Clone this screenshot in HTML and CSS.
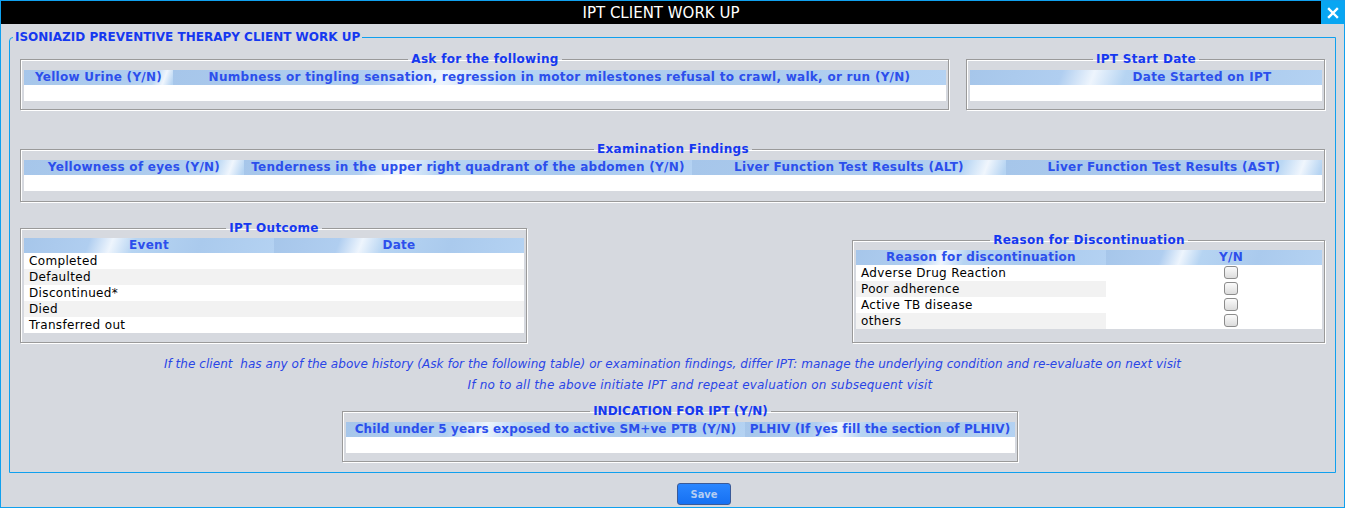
FILE: index.html
```html
<!DOCTYPE html>
<html>
<head>
<meta charset="utf-8">
<title>IPT CLIENT WORK UP</title>
<link rel="stylesheet" href="styles.css">
</head>
<body>
<div class="window">
  <div class="titlebar">
    <div class="title">IPT CLIENT WORK UP</div>
    <div class="close">
      <svg width="12" height="12" viewBox="0 0 12 12"><path d="M2 2 L10 10 M10 2 L2 10" stroke="#fff" stroke-width="2.4" stroke-linecap="square"/></svg>
    </div>
  </div>
  <div class="content">
    <fieldset class="main">
      <legend>ISONIAZID PREVENTIVE THERAPY CLIENT WORK UP</legend>

      <div class="row row-top">
        <fieldset class="panel ask">
          <legend>Ask for the following</legend>
          <table class="grid">
            <colgroup><col class="w149"><col></colgroup>
            <thead><tr><th class="shine-end">Yellow Urine (Y/N)</th><th>Numbness or tingling sensation, regression in motor milestones refusal to crawl, walk, or run (Y/N)</th></tr></thead>
            <tbody><tr><td></td><td></td></tr></tbody>
          </table>
        </fieldset>
        <fieldset class="panel start">
          <legend>IPT Start Date</legend>
          <table class="grid">
            <thead><tr><th class="shift-date">Date Started on IPT</th></tr></thead>
            <tbody><tr><td></td></tr></tbody>
          </table>
        </fieldset>
      </div>

      <fieldset class="panel exam">
        <legend>Examination Findings</legend>
        <table class="grid">
          <colgroup><col class="w220"><col class="w448"><col class="w314"><col></colgroup>
          <thead><tr>
            <th class="shine-end">Yellowness of eyes (Y/N)</th>
            <th>Tenderness in the upper right quadrant of the abdomen (Y/N)</th>
            <th class="shine-end">Liver Function Test Results (ALT)</th>
            <th class="shine-end">Liver Function Test Results (AST)</th>
          </tr></thead>
          <tbody><tr><td></td><td></td><td></td><td></td></tr></tbody>
        </table>
      </fieldset>

      <div class="row row-mid">
        <fieldset class="panel outcome">
          <legend>IPT Outcome</legend>
          <table class="grid list">
            <colgroup><col class="w250"><col></colgroup>
            <thead><tr><th>Event</th><th>Date</th></tr></thead>
            <tbody>
              <tr><td>Completed</td><td></td></tr>
              <tr class="alt"><td>Defaulted</td><td></td></tr>
              <tr><td>Discontinued*</td><td></td></tr>
              <tr class="alt"><td>Died</td><td></td></tr>
              <tr><td>Transferred out</td><td></td></tr>
            </tbody>
          </table>
        </fieldset>
        <fieldset class="panel reason">
          <legend>Reason for Discontinuation</legend>
          <table class="grid list">
            <colgroup><col class="w250"><col></colgroup>
            <thead><tr><th>Reason for discontinuation</th><th class="shift-yn">Y/N</th></tr></thead>
            <tbody>
              <tr><td>Adverse Drug Reaction</td><td class="check"><span class="box"></span></td></tr>
              <tr class="alt"><td>Poor adherence</td><td class="check"><span class="box"></span></td></tr>
              <tr><td>Active TB disease</td><td class="check"><span class="box"></span></td></tr>
              <tr class="alt"><td>others</td><td class="check"><span class="box"></span></td></tr>
            </tbody>
          </table>
        </fieldset>
      </div>

      <p class="note first">If the client  has any of the above history (Ask for the following table) or examination findings, differ IPT: manage the underlying condition and re-evaluate on next visit</p>
      <p class="note second">If no to all the above initiate IPT and repeat evaluation on subsequent visit</p>

      <fieldset class="panel indication">
        <legend class="upper">INDICATION FOR IPT (Y/N)</legend>
        <table class="grid">
          <colgroup><col class="w399"><col></colgroup>
          <thead><tr><th class="tight">Child under 5 years exposed to active SM+ve PTB (Y/N)</th><th class="tight">PLHIV (If yes fill the section of PLHIV)</th></tr></thead>
          <tbody><tr><td></td><td></td></tr></tbody>
        </table>
      </fieldset>
    </fieldset>

    <div class="actions">
      <button class="save" type="button">Save</button>
    </div>
  </div>
</div>
</body>
</html>
```

FILE: styles.css
```css
* { box-sizing: border-box; }

html, body {
  margin: 0;
  padding: 0;
  background: #d6d9df;
}

body {
  font-family: "DejaVu Sans", "Noto Sans", sans-serif;
  font-size: 12px;
  color: #000;
}

.window {
  width: 1345px;
  height: 508px;
  border: 1px solid #10a0ee;
  background: #d6d9df;
  display: flex;
  flex-direction: column;
}

.titlebar {
  height: 23px;
  background: #000;
  display: flex;
  align-items: stretch;
}

.title {
  flex: 1;
  text-align: center;
  color: #fff;
  font-size: 15px;
  line-height: 25px;
}

.close {
  width: 23px;
  background: #08a6f2;
  display: flex;
  align-items: center;
  justify-content: center;
}

.content {
  padding: 6px 8px 0 8px;
  display: flex;
  flex-direction: column;
}

fieldset {
  margin: 0;
  min-width: 0;
}

legend {
  font-weight: bold;
  font-size: 12px;
  line-height: 14px;
  color: #1538f0;
  padding: 0 2px;
}

.main {
  border: 1px solid #10a0ee;
  border-top-left-radius: 4px;
  padding: 8px 10px 10px 10px;
}

.main > legend {
  margin-left: -7px;
}

.panel {
  border: 1px solid #9a9a9a;
  box-shadow: inset 1px 1px 0 #fff, 1px 1px 0 #fff;
  padding: 4px 2px 8px 3px;
}

.panel > legend {
  margin-left: auto;
  margin-right: auto;
  padding: 0 3px;
  letter-spacing: 0.3px;
}

.panel > legend.upper { letter-spacing: 0; }

.row {
  display: flex;
  justify-content: space-between;
}

.row-top { gap: 17px; }
.ask { width: 929px; }
.start { width: 359px; }

.exam {
  margin-top: 32px;
  padding-bottom: 10px;
}

.row-mid {
  margin-top: 19px;
  align-items: flex-end;
}

.outcome {
  width: 507px;
  padding-top: 3px;
  padding-bottom: 9px;
}

.reason {
  width: 473px;
  padding-top: 3px;
  padding-bottom: 13px;
}

.note {
  margin: 0;
  text-align: center;
  font-style: italic;
  font-size: 12px;
  line-height: 21px;
  color: #2a45e6;
  white-space: pre;
  letter-spacing: 0.05px;
}

.note.first { margin-top: 11px; }

.note.second {
  padding-left: 55px;
  letter-spacing: 0.2px;
}

.indication {
  width: 676px;
  margin-left: 322px;
  margin-top: 8px;
}

.grid {
  width: 100%;
  border-collapse: collapse;
  table-layout: fixed;
  background: #fff;
}

.w149 { width: 149px; }
.w220 { width: 220px; }
.w448 { width: 448px; }
.w314 { width: 314px; }
.w250 { width: 250px; }
.w399 { width: 399px; }

.grid th {
  height: 15px;
  padding: 0;
  font-weight: bold;
  font-size: 12px;
  line-height: 15px;
  color: #2c4fec;
  text-align: center;
  white-space: nowrap;
  overflow: hidden;
  letter-spacing: 0.28px;
  background: linear-gradient(110deg, #a6c6ea 0%, #b0cef0 26%, #eef5fd 35%, #b6d4f2 44%, #aacaed 70%, #b4d2f2 100%);
}

.grid th.tight { letter-spacing: 0.12px; }

.grid th.shine-end {
  background: linear-gradient(110deg, #a6c6ea 0%, #afcdee 70%, #bad7f4 86%, #f0f6fd 93%, #b6d4f2 99%);
}

.grid th.shift-date { padding-left: 112px; }
.grid th.shift-yn { padding-left: 34px; }

.grid td {
  height: 16px;
  padding: 0 5px;
  line-height: 16px;
  white-space: nowrap;
  overflow: hidden;
  background: #fff;
  letter-spacing: 0.35px;
}

.grid tr.alt td:first-child { background: #f2f2f2; }
.outcome .grid tr.alt td { background: #f2f2f2; }

.grid td.check {
  padding: 0 0 0 34px;
  text-align: center;
}

.box {
  display: inline-block;
  width: 14px;
  height: 13px;
  border: 1px solid #8c8c8c;
  border-radius: 3px;
  background: linear-gradient(#fbfbfb, #dcdcdc);
  vertical-align: -2px;
}

.actions {
  display: flex;
  justify-content: center;
  padding-top: 10px;
  padding-left: 63px;
}

.save {
  width: 54px;
  height: 22px;
  padding: 0;
  border: 1px solid #3a5a98;
  border-radius: 3px;
  background: linear-gradient(#2a86ff, #1670f2);
  color: #b4cdf2;
  font-family: "DejaVu Sans Condensed", "DejaVu Sans", sans-serif;
  font-weight: bold;
  font-size: 11px;
}
```
